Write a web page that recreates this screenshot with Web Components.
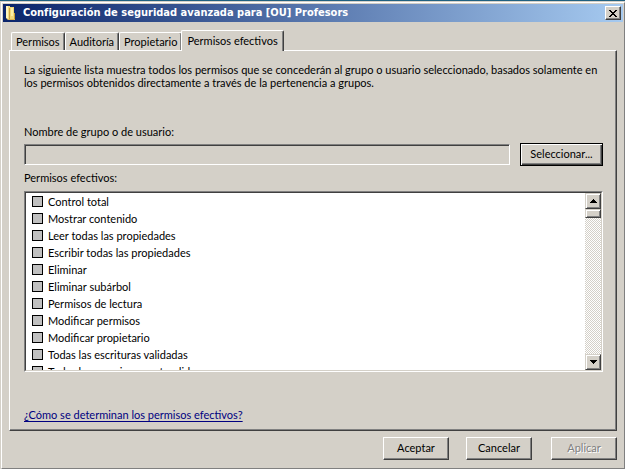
<!DOCTYPE html>
<html lang="es">
<head>
<meta charset="utf-8">
<title>Configuración de seguridad avanzada</title>
<style>
  html, body { height: 100%; }
  body {
    margin: 0; background: #d4d0c8; color: #000;
    font: 11px/13px Lato, "Liberation Sans", Arial, sans-serif;
    --face: #d4d0c8; --shade: #808080; --dark: #404040;
  }
</style>
</head>
<body>
<security-dialog></security-dialog>
<script>
const base = `:host,*{box-sizing:border-box}`;
function define(name, html, setup) {
  const tpl = document.createElement('template');
  tpl.innerHTML = html;
  customElements.define(name, class extends HTMLElement {
    constructor() {
      super();
      this.attachShadow({ mode: 'open' }).append(tpl.content.cloneNode(true));
    }
    connectedCallback() { if (setup) setup(this, this.shadowRoot); }
  });
}

define('bevel-button', `<style>${base}
  :host{display:block;height:23px;width:66px}
  button{display:block;width:100%;height:100%;padding:0 0 2px;margin:0;font:inherit;color:#000;background:var(--face);
    border:1px solid;border-color:#fff var(--dark) var(--dark) #fff;box-shadow:inset -1px -1px var(--shade);text-align:center;white-space:nowrap}
  button:disabled{color:var(--shade);text-shadow:1px 1px #fff}
  :host([default]) button{box-shadow:inset 1px 1px #fff,inset -1px -1px var(--dark),inset -2px -2px var(--shade);border-color:#000}
  :host([small]){width:16px;height:16px}
  :host([small]) button{display:grid;place-items:center;padding:0}
  :host([scroll]) button{border-color:var(--face) var(--dark) var(--dark) var(--face);box-shadow:inset 1px 1px #fff,inset -1px -1px var(--shade)}
</style><button type="button"><slot></slot></button>`, (el, root) => {
  const b = root.querySelector('button');
  b.disabled = el.hasAttribute('disabled');
  if (el.hasAttribute('label')) b.setAttribute('aria-label', el.getAttribute('label'));
});

define('title-bar', `<style>${base}
  :host{display:flex;align-items:center;height:18px;padding:0 2px 0 1px;color:#fff;background:linear-gradient(90deg,#0a246a,#a6caf0)}
  h1{flex:1;margin:0 0 0 3px;font:bold 11px/18px "DejaVu Sans Condensed","DejaVu Sans",sans-serif;font-stretch:condensed;white-space:nowrap}
  svg{display:block}
  bevel-button{height:14px;width:16px}
</style>
<svg width="16" height="16" viewBox="0 0 16 16" aria-hidden="true">
  <path d="M2 1h4v1h1v13H4l-2-2z" fill="#f3dc83"/><path d="M2 1h2v12H2z" fill="#fff6bd"/>
  <path d="M6 2h4v6h1v6l-4 1H6z" fill="#f0d678"/><path d="M5 3h1v12H5z" fill="#cfa540"/>
  <path d="M7 3h2v8H7z" fill="#fbeea6"/><path d="M10 8h1v6h-1z" fill="#c79b35"/>
  <path d="M4 14h7v1H4z" fill="#dcb453"/>
</svg>
<h1><slot></slot></h1>
<bevel-button small label="Cerrar"><svg width="8" height="7" viewBox="0 0 8 7" shape-rendering="crispEdges"><path d="M0 0h2v1h1v1h2V1h1V0h2v1H7v1H6v1H5v1h1v1h1v1h1v1H6V6H5V5H3v1H2v1H0V6h1V5h1V4h1V3H2V2H1V1H0z"/></svg></bevel-button>`);

define('tab-item', `<style>${base}
  :host{display:block;height:18px;min-width:0}
  button{display:block;height:100%;width:100%;margin:0;padding:0 4px;font:inherit;color:#000;background:var(--face);white-space:nowrap;
    border:1px solid;border-color:#fff var(--dark) transparent #fff;border-bottom:0;border-radius:2px 2px 0 0;box-shadow:inset -1px 0 var(--shade)}
  :host([active]){height:21px;margin:0 0 -1px -1px;z-index:1}
  :host([active]) button{padding:0 5px 2px}
</style><button type="button" role="tab"><slot></slot></button>`, (el, root) =>
  root.querySelector('button').setAttribute('aria-selected', el.hasAttribute('active')));

define('tab-panel', `<style>${base}
  :host{display:flex;flex-direction:column;min-height:0}
  nav{display:flex;align-items:flex-end;padding-left:2px;height:20px}
  section{flex:1;min-height:0;display:flex;flex-direction:column;padding:12px 13px 9px 14px;
    border:1px solid;border-color:#fff var(--dark) var(--dark) #fff;box-shadow:inset -1px -1px var(--shade)}
</style><nav role="tablist"><slot name="tab"></slot></nav><section role="tabpanel"><slot></slot></section>`);

define('name-field', `<style>${base}
  :host{display:grid;grid-template-columns:1fr 83px;column-gap:10px;row-gap:5px;align-items:center}
  label{grid-column:1/-1}
  input{width:100%;height:21px;margin:0;padding:0 4px;font:inherit;border-radius:0;background:var(--face);
    border:1px solid;border-color:var(--shade) #fff #fff var(--shade);box-shadow:inset 1px 1px var(--dark);outline:0}
  bevel-button{width:83px}
</style>
<label for="name">Nombre de grupo o de usuario:</label>
<input id="name" type="text" readonly>
<bevel-button default>Seleccionar...</bevel-button>`);

define('check-row', `<style>${base}
  :host{display:block;height:17px}
  label{display:flex;align-items:center;gap:5px;height:17px;padding-bottom:2px;white-space:nowrap}
  input{appearance:none;width:11px;height:11px;margin:0;border:1px solid #000;border-radius:0;background:#c0c0c0}
</style><label><input type="checkbox" disabled><slot></slot></label>`);

define('scroll-list', `<style>${base}
  :host{display:flex;min-height:0;background:#fff;border:1px solid;border-color:var(--shade) #fff #fff var(--shade)}
  .inner{flex:1;display:flex;min-width:0;border:1px solid;border-color:var(--dark) var(--face) var(--face) var(--dark)}
  .rows{flex:1;min-width:0;overflow:hidden;padding:1px 6px 0}
  .bar{width:16px;display:flex;flex-direction:column;background:repeating-conic-gradient(#fff 0 25%,var(--face) 0 50%) 0 0/2px 2px}
  .thumb{height:9px;flex:none}
  .down{margin-top:auto}
  svg{display:block}
</style>
<div class="inner"><div class="rows"><slot></slot></div>
<div class="bar">
  <bevel-button small scroll label="Subir"><svg width="7" height="4" viewBox="0 0 7 4" shape-rendering="crispEdges"><path d="M3 0h1v1h1v1h1v1h1v1H0V3h1V2h1V1h1z"/></svg></bevel-button>
  <bevel-button class="thumb" small scroll label="Desplazar"></bevel-button>
  <bevel-button class="down" small scroll label="Bajar"><svg width="7" height="4" viewBox="0 0 7 4" shape-rendering="crispEdges"><path d="M0 0h7v1H6v1H5v1H4v1H3V3H2V2H1V1H0z"/></svg></bevel-button>
</div></div>`);

define('security-dialog', `<style>${base}
  :host{display:flex;flex-direction:column;height:100%;min-height:400px;border-top:1px solid #1f6080}
  main{flex:1;min-height:0;display:flex;flex-direction:column;margin:1px 0 0 1px;padding:1px 1px 0 1px;
    border:1px solid;border-color:#fff var(--shade) var(--shade) #fff}
  tab-panel{flex:1;margin:8px 6px 0}
  p{margin:0;flex:1 0 26px}
  .caption{margin:5px 0 7px}
  scroll-list{flex:0 1 181px}
  .help{margin-top:36px}
  a{color:#000080;text-decoration:underline;text-underline-offset:2px}
  footer{display:flex;justify-content:flex-end;gap:17px;padding:6px 6px 8px}
  .last{margin-left:2px}
</style>
<main>
  <title-bar>Configuración de seguridad avanzada para [OU] Profesors</title-bar>
  <tab-panel>
    <tab-item slot="tab">Permisos</tab-item>
    <tab-item slot="tab">Auditoría</tab-item>
    <tab-item slot="tab">Propietario</tab-item>
    <tab-item slot="tab" active>Permisos efectivos</tab-item>
    <p>La siguiente lista muestra todos los permisos que se concederán al grupo o usuario seleccionado, basados solamente en los permisos obtenidos directamente a través de la pertenencia a grupos.</p>
    <name-field></name-field>
    <div class="caption">Permisos efectivos:</div>
    <scroll-list>
      <check-row>Control total</check-row>
      <check-row>Mostrar contenido</check-row>
      <check-row>Leer todas las propiedades</check-row>
      <check-row>Escribir todas las propiedades</check-row>
      <check-row>Eliminar</check-row>
      <check-row>Eliminar subárbol</check-row>
      <check-row>Permisos de lectura</check-row>
      <check-row>Modificar permisos</check-row>
      <check-row>Modificar propietario</check-row>
      <check-row>Todas las escrituras validadas</check-row>
      <check-row>Todas las creaciones extendidas</check-row>
    </scroll-list>
    <div class="help"><a href="#ayuda">¿Cómo se determinan los permisos efectivos?</a></div>
  </tab-panel>
  <footer>
    <bevel-button>Aceptar</bevel-button>
    <bevel-button>Cancelar</bevel-button>
    <bevel-button class="last" disabled>Aplicar</bevel-button>
  </footer>
</main>`);
</script>
</body>
</html>
